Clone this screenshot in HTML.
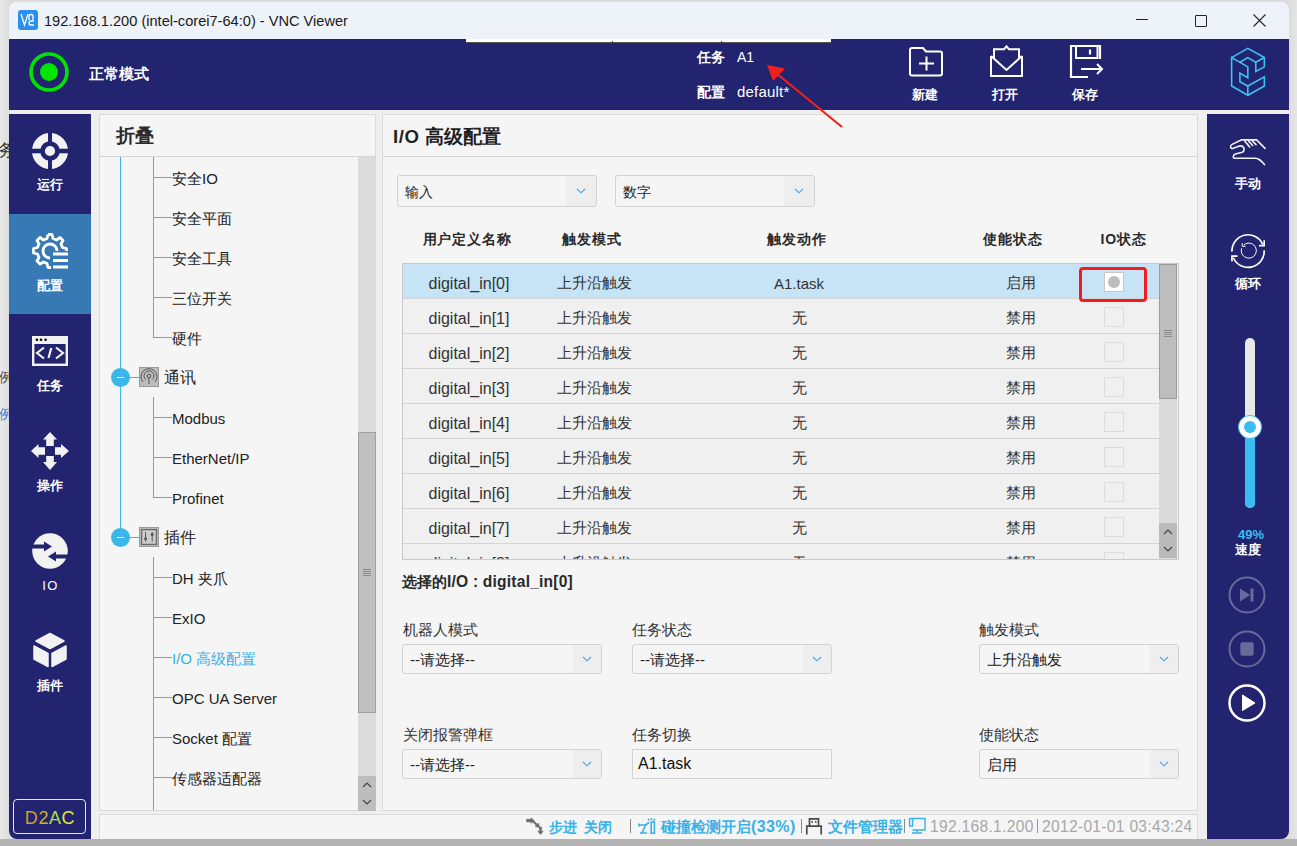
<!DOCTYPE html>
<html><head><meta charset="utf-8"><style>
html,body{margin:0;padding:0}
body{width:1297px;height:846px;position:relative;overflow:hidden;background:#e6e6e6;font-family:"Liberation Sans",sans-serif;}
.a{position:absolute}
svg{position:absolute;overflow:visible}
</style></head><body>

<div class="a" style="left:0px;top:0px;width:1297px;height:846px;background:linear-gradient(90deg,#e9e9e9 0px,#dcdcdc 9px,#dcdcdc 1289px,#e6e6e6 1297px)"></div>
<div class="a" style="left:0px;top:839px;width:1297px;height:7px;background:#b3b3b3"></div>
<div class="a" style="left:-2px;top:141.5px;font-size:17px;line-height:17px;color:#333;font-weight:normal;white-space:nowrap;">务</div>
<div class="a" style="left:-1px;top:370px;font-size:14px;line-height:14px;color:#444;font-weight:normal;white-space:nowrap;">例</div>
<div class="a" style="left:-1px;top:406.5px;font-size:14px;line-height:14px;color:#2a7ad8;font-weight:normal;white-space:nowrap;">例</div>
<div class="a" style="left:9px;top:2px;width:1280px;height:837px;background:#efefef;border-radius:8px;"></div>
<div class="a" style="left:9px;top:2px;width:1280px;height:37px;background:#eef2f9;border-radius:8px 8px 0 0;"></div>
<div class="a" style="left:18px;top:10px;width:20px;height:20px;background:#2b8ff0;border-radius:3px"></div>
<svg style="left:18px;top:10px" width="20" height="20" viewBox="0 0 20 20"><path d="M3,4 L6.5,15 L10,4" fill="none" stroke="#fff" stroke-width="1.3"/><path d="M11,10 L11,6.5 Q11,4.5 13,4.5 Q15,4.5 15,6.5 L15,10" fill="none" stroke="#fff" stroke-width="1.3"/><path d="M16,11 L13,11 Q11,11 11,13 Q11,15 13,15 L16,15" fill="none" stroke="#fff" stroke-width="1.3"/></svg>
<div class="a" style="left:44px;top:12px;font-size:14.6px;line-height:18px;color:#1a1a1a;font-weight:normal;white-space:nowrap;">192.168.1.200 (intel-corei7-64:0) - VNC Viewer</div>
<div class="a" style="left:1136px;top:19px;width:12px;height:1px;background:#222"></div>
<div class="a" style="left:1195px;top:15px;width:10px;height:10px;border:1px solid #222;border-radius:1px"></div>
<svg style="left:1253px;top:14px" width="13" height="13" viewBox="0 0 13 13"><path d="M0.5,0.5 L12.5,12.5 M12.5,0.5 L0.5,12.5" stroke="#222" stroke-width="1.1"/></svg>
<div class="a" style="left:9px;top:39px;width:1280px;height:71px;background:#22246f"></div>
<div class="a" style="left:466px;top:39px;width:365px;height:3px;background:#fff;border-bottom:1px solid #555"></div>
<div class="a" style="left:612px;top:41px;width:1px;height:2px;background:#444"></div>
<div class="a" style="left:721px;top:41px;width:1px;height:2px;background:#444"></div>
<svg style="left:29px;top:52px" width="40" height="40" viewBox="0 0 40 40"><circle cx="20" cy="20" r="18" fill="none" stroke="#00e600" stroke-width="3.6"/><circle cx="20" cy="20" r="9" fill="#00e600"/></svg>
<div class="a" style="left:89px;top:66px;font-size:14.5px;line-height:16px;color:#fff;font-weight:bold;white-space:nowrap;">正常模式</div>
<div class="a" style="left:697px;top:49px;font-size:14px;line-height:16px;color:#fff;font-weight:bold;white-space:nowrap;">任务</div>
<div class="a" style="left:737px;top:49px;font-size:14px;line-height:16px;color:#fff;font-weight:normal;white-space:nowrap;">A1</div>
<div class="a" style="left:697px;top:84px;font-size:14px;line-height:16px;color:#fff;font-weight:bold;white-space:nowrap;">配置</div>
<div class="a" style="left:737px;top:83.5px;font-size:15px;line-height:16px;color:#fff;font-weight:normal;white-space:nowrap;letter-spacing:0.2px">default*</div>
<svg style="left:909px;top:46px" width="36" height="32" viewBox="0 0 36 32"><path d="M3,2 L14,2 L17,5.5 L31,5.5 Q33,5.5 33,7.5 L33,27.5 Q33,29.5 31,29.5 L3,29.5 Q1,29.5 1,27.5 L1,4 Q1,2 3,2 Z" fill="none" stroke="#fff" stroke-width="2"/><path d="M17.5,10.5 L17.5,24.5 M10,17.5 L25,17.5" stroke="#fff" stroke-width="2"/></svg>
<div class="a" style="left:912px;top:87px;font-size:13px;line-height:15px;color:#fff;font-weight:bold;white-space:nowrap;">新建</div>
<svg style="left:989px;top:43px" width="36" height="36" viewBox="0 0 36 36"><path d="M2,13 L2,33 L33,33 L33,13" fill="none" stroke="#fff" stroke-width="2"/><path d="M2,13 L17.5,27 L33,13" fill="none" stroke="#fff" stroke-width="2"/><path d="M5,16 L5,6.3 L15,6.3 L17.5,3.3 L20,6.3 L30,6.3 L30,16" fill="none" stroke="#fff" stroke-width="2"/></svg>
<div class="a" style="left:992px;top:87px;font-size:13px;line-height:15px;color:#fff;font-weight:bold;white-space:nowrap;">打开</div>
<svg style="left:1068px;top:43px" width="38" height="36" viewBox="0 0 38 36"><path d="M20,34 L3,34 L3,3 L32,3 L32,16" fill="none" stroke="#fff" stroke-width="2.2"/><path d="M8,3 L8,15 L29.5,15 L29.5,3" fill="none" stroke="#fff" stroke-width="2"/><path d="M22,6.5 L22,11.5" stroke="#fff" stroke-width="2.2"/><path d="M13,26 L34,26 M29,21 L34,26 L29,31" fill="none" stroke="#fff" stroke-width="2"/></svg>
<div class="a" style="left:1072px;top:87px;font-size:13px;line-height:15px;color:#fff;font-weight:bold;white-space:nowrap;">保存</div>
<svg style="left:1225px;top:44px" width="45" height="56" viewBox="0 0 680 846"><g fill="none" stroke="#3cc3f2" stroke-width="24" stroke-linejoin="miter"><path d="M100,205 L345,65 L595,205 L595,345 L465,415 L465,275 L595,205"/><path d="M100,205 L100,635 L345,775 L595,635 L595,495 L345,635 L225,570 L225,440 L345,510 L345,345 Z"/><path d="M225,275 L345,205 L465,275"/><path d="M345,635 L345,775"/></g></svg>
<div class="a" style="left:9px;top:114px;width:82px;height:725px;background:#22246f;border-radius:0 0 0 8px"></div>
<div class="a" style="left:9px;top:214px;width:82px;height:100px;background:#3779b5"></div>
<svg style="left:32px;top:133px" width="36" height="36" viewBox="0 0 36 36"><circle cx="18" cy="18" r="13.9" fill="none" stroke="#f2f2f2" stroke-width="8.2"/><rect x="16" y="0" width="4" height="36" fill="#22246f"/><rect x="0" y="15.7" width="36" height="4.6" fill="#22246f"/><circle cx="18" cy="18" r="5.1" fill="#f2f2f2"/></svg>
<div class="a" style="left:-100px;width:300px;text-align:center;top:177px;font-size:13px;line-height:15px;color:#fff;font-weight:bold;white-space:nowrap;">运行</div>
<svg style="left:31px;top:232px" width="38" height="38" viewBox="0 0 38 38"><path d="M17,2.5 L21,2.5 L22,6.5 L25.5,8 L29,5.5 L32,8.5 L30,12 L31.5,15.5 L35.5,16.5 L35.5,19" fill="none" stroke="#fff" stroke-width="2.8" stroke-linejoin="round"/><path d="M17,2.5 L16,6.5 L12.5,8 L9,5.5 L6,8.5 L8,12 L6.5,15.5 L2.5,16.5 L2.5,21 L6.5,22 L8,25.5 L6,29 L9,32 L12.5,30 L16,31.5 L17,35.5 L20,35.5" fill="none" stroke="#fff" stroke-width="2.8" stroke-linejoin="round"/><path d="M19,26 A7,7 0 1 1 26,19" fill="none" stroke="#fff" stroke-width="2.8"/><path d="M22,22 L37,22 M22,28.5 L37,28.5 M22,35 L37,35" stroke="#fff" stroke-width="2.8"/></svg>
<div class="a" style="left:-100px;width:300px;text-align:center;top:278px;font-size:13px;line-height:15px;color:#fff;font-weight:bold;white-space:nowrap;">配置</div>
<svg style="left:32px;top:336px" width="36" height="30" viewBox="0 0 36 30"><rect x="1.2" y="1.2" width="33.6" height="27.6" fill="none" stroke="#f2f2f2" stroke-width="2.4"/><rect x="1" y="1" width="34" height="7" fill="#f2f2f2"/><circle cx="4.9" cy="3.8" r="1.3" fill="{NAVY}"/><circle cx="9" cy="3.8" r="1.3" fill="{NAVY}"/><circle cx="13.6" cy="3.8" r="1.3" fill="{NAVY}"/><path d="M12,11.5 L5,17 L12,22.5 M24,11.5 L31,17 L24,22.5 M19.3,12 L16.5,22" fill="none" stroke="#f2f2f2" stroke-width="2.2"/></svg>
<div class="a" style="left:-100px;width:300px;text-align:center;top:378px;font-size:13px;line-height:15px;color:#fff;font-weight:bold;white-space:nowrap;">任务</div>
<svg style="left:31px;top:432px" width="38" height="38" viewBox="0 0 38 38"><g fill="#f2f2f2"><path d="M19,0 L26,7.5 L22.8,7.5 L22.8,14 L15.2,14 L15.2,7.5 L12,7.5 Z"/><path d="M19,38 L26,30 L22.8,30 L22.8,24 L15.2,24 L15.2,30 L12,30 Z"/><path d="M0,19 L7.5,12 L7.5,15.2 L14,15.2 L14,22.8 L7.5,22.8 L7.5,26 Z"/><path d="M38,19 L30,12 L30,15.2 L24,15.2 L24,22.8 L30,22.8 L30,26 Z"/></g></svg>
<div class="a" style="left:-100px;width:300px;text-align:center;top:478px;font-size:13px;line-height:15px;color:#fff;font-weight:bold;white-space:nowrap;">操作</div>
<svg style="left:32px;top:533px" width="36" height="36" viewBox="0 0 36 36"><circle cx="18" cy="18" r="17.8" fill="#f2f2f2"/><path d="M0,13.5 L13,13.5" stroke="#22246f" stroke-width="4"/><path d="M12,8.5 L20,13.5 L12,18.5 Z" fill="#22246f"/><path d="M23,23.5 L36,23.5" stroke="#22246f" stroke-width="4"/><path d="M24,18.5 L16,23.5 L24,28.5 Z" fill="#22246f"/></svg>
<div class="a" style="left:-100px;width:300px;text-align:center;top:578px;font-size:13px;line-height:15px;color:#fff;font-weight:normal;white-space:nowrap;letter-spacing:1.5px;text-indent:1px">IO</div>
<svg style="left:32px;top:632px" width="36" height="36" viewBox="0 0 36 36"><g fill="#f2f2f2" stroke="#f2f2f2" stroke-width="1.5" stroke-linejoin="round"><path d="M18,1.5 L32,9 L18,16.5 L4,9 Z"/><path d="M2,14 L16,21.5 L16,34.5 L2,27 Z"/><path d="M20,21.5 L34,14 L34,27 L20,34.5 Z"/></g></svg>
<div class="a" style="left:-100px;width:300px;text-align:center;top:678px;font-size:13px;line-height:15px;color:#fff;font-weight:bold;white-space:nowrap;">插件</div>
<div class="a" style="left:13px;top:799px;width:71px;height:33px;border:1px solid #e8e8f0;border-radius:4px"></div>
<div class="a" style="left:13px;top:806px;width:73px;text-align:center;font-size:18px;line-height:24px;font-weight:normal;letter-spacing:0.6px;text-indent:1px"><span style="color:#d09a30">D</span><span style="color:#c9b41c">2</span><span style="color:#a8e040">A</span><span style="color:#e2e640">C</span></div>
<div class="a" style="left:99px;top:114px;width:277px;height:697px;background:#f5f5f5;border:1px solid #dadada;box-sizing:border-box"></div>
<div class="a" style="left:100px;top:156px;width:276px;height:1px;background:#d6d6d6"></div>
<div class="a" style="left:116px;top:125px;font-size:19px;line-height:22px;color:#2b2b2b;font-weight:bold;white-space:nowrap;">折叠</div>
<div class="a" style="left:100px;top:157px;width:258px;height:653px;overflow:hidden">
<div class="a" style="left:20px;top:-7px;width:1px;height:390px;background:#3ab7ea"></div>
<div class="a" style="left:53px;top:-7px;width:1px;height:188px;background:#3ab7ea"></div>
<div class="a" style="left:53px;top:240px;width:1px;height:101px;background:#3ab7ea"></div>
<div class="a" style="left:53px;top:400px;width:1px;height:260px;background:#3ab7ea"></div>
<div class="a" style="left:53px;top:20px;width:19px;height:1px;background:#3ab7ea"></div>
<div class="a" style="left:72px;top:12.5px;font-size:15px;line-height:18px;color:#222;white-space:nowrap">安全IO</div>
<div class="a" style="left:53px;top:60px;width:19px;height:1px;background:#3ab7ea"></div>
<div class="a" style="left:72px;top:52.5px;font-size:15px;line-height:18px;color:#222;white-space:nowrap">安全平面</div>
<div class="a" style="left:53px;top:100px;width:19px;height:1px;background:#3ab7ea"></div>
<div class="a" style="left:72px;top:92.5px;font-size:15px;line-height:18px;color:#222;white-space:nowrap">安全工具</div>
<div class="a" style="left:53px;top:140px;width:19px;height:1px;background:#3ab7ea"></div>
<div class="a" style="left:72px;top:132.5px;font-size:15px;line-height:18px;color:#222;white-space:nowrap">三位开关</div>
<div class="a" style="left:53px;top:180px;width:19px;height:1px;background:#3ab7ea"></div>
<div class="a" style="left:72px;top:172.5px;font-size:15px;line-height:18px;color:#222;white-space:nowrap">硬件</div>
<div class="a" style="left:53px;top:260px;width:19px;height:1px;background:#3ab7ea"></div>
<div class="a" style="left:72px;top:252.5px;font-size:15px;line-height:18px;color:#222;white-space:nowrap">Modbus</div>
<div class="a" style="left:53px;top:300px;width:19px;height:1px;background:#3ab7ea"></div>
<div class="a" style="left:72px;top:292.5px;font-size:15px;line-height:18px;color:#222;white-space:nowrap">EtherNet/IP</div>
<div class="a" style="left:53px;top:340px;width:19px;height:1px;background:#3ab7ea"></div>
<div class="a" style="left:72px;top:332.5px;font-size:15px;line-height:18px;color:#222;white-space:nowrap">Profinet</div>
<div class="a" style="left:53px;top:420px;width:19px;height:1px;background:#3ab7ea"></div>
<div class="a" style="left:72px;top:412.5px;font-size:15px;line-height:18px;color:#222;white-space:nowrap">DH 夹爪</div>
<div class="a" style="left:53px;top:460px;width:19px;height:1px;background:#3ab7ea"></div>
<div class="a" style="left:72px;top:452.5px;font-size:15px;line-height:18px;color:#222;white-space:nowrap">ExIO</div>
<div class="a" style="left:53px;top:500px;width:19px;height:1px;background:#3ab7ea"></div>
<div class="a" style="left:72px;top:492.5px;font-size:15px;line-height:18px;color:#3ab0e6;white-space:nowrap">I/O 高级配置</div>
<div class="a" style="left:53px;top:540px;width:19px;height:1px;background:#3ab7ea"></div>
<div class="a" style="left:72px;top:532.5px;font-size:15px;line-height:18px;color:#222;white-space:nowrap">OPC UA Server</div>
<div class="a" style="left:53px;top:580px;width:19px;height:1px;background:#3ab7ea"></div>
<div class="a" style="left:72px;top:572.5px;font-size:15px;line-height:18px;color:#222;white-space:nowrap">Socket 配置</div>
<div class="a" style="left:53px;top:620px;width:19px;height:1px;background:#3ab7ea"></div>
<div class="a" style="left:72px;top:612.5px;font-size:15px;line-height:18px;color:#222;white-space:nowrap">传感器适配器</div>
<div class="a" style="left:11px;top:211px;width:19px;height:19px;border-radius:50%;background:#3ab7ea"></div>
<div class="a" style="left:17px;top:220px;width:7px;height:1px;background:#fff"></div>
<div class="a" style="left:29px;top:220px;width:10px;height:1px;background:#3ab7ea"></div>
<div class="a" style="left:39px;top:210px;width:20px;height:20px;background:#bcbcbc;border:1px solid #9a9a9a;box-sizing:border-box"></div>
<div class="a" style="left:64px;top:211px;font-size:16px;line-height:20px;color:#222;white-space:nowrap">通讯</div>
<div class="a" style="left:11px;top:371px;width:19px;height:19px;border-radius:50%;background:#3ab7ea"></div>
<div class="a" style="left:17px;top:380px;width:7px;height:1px;background:#fff"></div>
<div class="a" style="left:29px;top:380px;width:10px;height:1px;background:#3ab7ea"></div>
<div class="a" style="left:39px;top:370px;width:20px;height:20px;background:#bcbcbc;border:1px solid #9a9a9a;box-sizing:border-box"></div>
<div class="a" style="left:64px;top:371px;font-size:16px;line-height:20px;color:#222;white-space:nowrap">插件</div>
</div>
<svg style="left:139px;top:367px" width="20" height="20" viewBox="0 0 20 20"><g fill="none" stroke="#555" stroke-width="1"><circle cx="10" cy="9" r="1.8"/><path d="M10,11 L10,17"/><path d="M6.5,12.5 A5,5 0 1 1 13.5,12.5"/><path d="M4,15 A8,8 0 1 1 16,15"/></g></svg>
<svg style="left:139px;top:527px" width="20" height="20" viewBox="0 0 20 20"><rect x="2.6" y="2.6" width="14.8" height="14.8" fill="#cdcdcd" stroke="#6a6a6a" stroke-width="1.3"/><g stroke="#555" stroke-width="1"><path d="M6.6,5 L6.6,14.6 M13.2,5 L13.2,14.6"/></g><circle cx="6.6" cy="11.8" r="1.5" fill="#555"/><circle cx="13.2" cy="7.6" r="1.5" fill="#555"/></svg>
<div class="a" style="left:358px;top:157px;width:18px;height:654px;background:#dcdcdc"></div>
<div class="a" style="left:358px;top:432px;width:18px;height:281px;background:#c0c0c0;border:1px solid #a0a0a0;box-sizing:border-box"></div>
<div class="a" style="left:363px;top:569px;width:8px;height:1px;background:#8a8a8a"></div>
<div class="a" style="left:363px;top:571px;width:8px;height:1px;background:#8a8a8a"></div>
<div class="a" style="left:363px;top:573px;width:8px;height:1px;background:#8a8a8a"></div>
<div class="a" style="left:363px;top:575px;width:8px;height:1px;background:#8a8a8a"></div>
<div class="a" style="left:358px;top:776px;width:18px;height:35px;background:#bdbdbd"></div>
<svg style="left:358px;top:776px" width="18" height="35" viewBox="0 0 18 35"><path d="M5,11 L9,7 L13,11 M5,24 L9,28 L13,24" fill="none" stroke="#444" stroke-width="1.2"/></svg>
<div class="a" style="left:382px;top:114px;width:816px;height:697px;background:#f5f5f5;border:1px solid #dadada;box-sizing:border-box"></div>
<div class="a" style="left:383px;top:156px;width:814px;height:1px;background:#d6d6d6"></div>
<div class="a" style="left:393px;top:126px;font-size:18.6px;line-height:22px;color:#1f1f1f;font-weight:bold;white-space:nowrap;"><span style="letter-spacing:0.6px">I/O </span>高级配置</div>
<div class="a" style="left:397px;top:175px;width:200px;height:32px;background:#f5f5f5;border:1px solid #d2d2d2;border-radius:3px;box-sizing:border-box;overflow:hidden"><div class="a" style="right:0;top:0;width:30px;height:100%;background:#eeeeee"></div><div class="a" style="left:7px;top:1px;line-height:30px;font-size:14px;color:#222;white-space:nowrap">输入</div><svg style="right:10px;top:12px" width="10" height="6" viewBox="0 0 10 6"><path d="M1,1 L5,4.8 L9,1" fill="none" stroke="#4aa3ea" stroke-width="1.1"/></svg></div>
<div class="a" style="left:615px;top:175px;width:200px;height:32px;background:#f5f5f5;border:1px solid #d2d2d2;border-radius:3px;box-sizing:border-box;overflow:hidden"><div class="a" style="right:0;top:0;width:30px;height:100%;background:#eeeeee"></div><div class="a" style="left:7px;top:1px;line-height:30px;font-size:14px;color:#222;white-space:nowrap">数字</div><svg style="right:10px;top:12px" width="10" height="6" viewBox="0 0 10 6"><path d="M1,1 L5,4.8 L9,1" fill="none" stroke="#4aa3ea" stroke-width="1.1"/></svg></div>
<div class="a" style="left:317px;width:300px;text-align:center;top:230.5px;font-size:14px;line-height:17px;color:#2a2a2a;font-weight:bold;white-space:nowrap;letter-spacing:0.8px">用户定义名称</div>
<div class="a" style="left:442px;width:300px;text-align:center;top:230.5px;font-size:14px;line-height:17px;color:#2a2a2a;font-weight:bold;white-space:nowrap;letter-spacing:0.8px">触发模式</div>
<div class="a" style="left:647px;width:300px;text-align:center;top:230.5px;font-size:14px;line-height:17px;color:#2a2a2a;font-weight:bold;white-space:nowrap;letter-spacing:0.8px">触发动作</div>
<div class="a" style="left:863px;width:300px;text-align:center;top:230.5px;font-size:14px;line-height:17px;color:#2a2a2a;font-weight:bold;white-space:nowrap;letter-spacing:0.8px">使能状态</div>
<div class="a" style="left:973.5px;width:300px;text-align:center;top:230.5px;font-size:14px;line-height:17px;color:#2a2a2a;font-weight:bold;white-space:nowrap;letter-spacing:0.8px">IO状态</div>
<div class="a" style="left:402px;top:263px;width:777px;height:297px;background:#f0f0f0;border:1px solid #c9c9c9;box-sizing:border-box"></div>
<div class="a" style="left:403px;top:264px;width:756px;height:295px;overflow:hidden">
<div class="a" style="left:0;top:0px;width:756px;height:35px;background:#c6e4f6;border-bottom:1px solid #d4d4d4;box-sizing:border-box"></div>
<div class="a" style="left:-34px;width:200px;text-align:center;top:1.5px;line-height:35px;font-size:16px;color:#333;white-space:nowrap">digital_in[0]</div>
<div class="a" style="left:91.5px;width:200px;text-align:center;top:0.5px;line-height:35px;font-size:15px;color:#333;white-space:nowrap">上升沿触发</div>
<div class="a" style="left:296px;width:200px;text-align:center;top:1.5px;line-height:35px;font-size:15px;color:#333;white-space:nowrap">A1.task</div>
<div class="a" style="left:517.5px;width:200px;text-align:center;top:0.5px;line-height:35px;font-size:15px;color:#333;white-space:nowrap">启用</div>
<div class="a" style="left:701px;top:8px;width:20px;height:20px;background:#fff;border:1px solid #c8c8c8;box-sizing:border-box"></div>
<div class="a" style="left:705px;top:12px;width:12px;height:12px;border-radius:50%;background:#bdbdbd"></div>
<div class="a" style="left:0;top:35px;width:756px;height:35px;background:#f0f0f0;border-bottom:1px solid #d4d4d4;box-sizing:border-box"></div>
<div class="a" style="left:-34px;width:200px;text-align:center;top:36.5px;line-height:35px;font-size:16px;color:#333;white-space:nowrap">digital_in[1]</div>
<div class="a" style="left:91.5px;width:200px;text-align:center;top:35.5px;line-height:35px;font-size:15px;color:#333;white-space:nowrap">上升沿触发</div>
<div class="a" style="left:296px;width:200px;text-align:center;top:35.5px;line-height:35px;font-size:15px;color:#333;white-space:nowrap">无</div>
<div class="a" style="left:517.5px;width:200px;text-align:center;top:35.5px;line-height:35px;font-size:15px;color:#333;white-space:nowrap">禁用</div>
<div class="a" style="left:701px;top:43px;width:20px;height:20px;background:#f0f0f0;border:1px solid #dcdcdc;box-sizing:border-box"></div>
<div class="a" style="left:0;top:70px;width:756px;height:35px;background:#f0f0f0;border-bottom:1px solid #d4d4d4;box-sizing:border-box"></div>
<div class="a" style="left:-34px;width:200px;text-align:center;top:71.5px;line-height:35px;font-size:16px;color:#333;white-space:nowrap">digital_in[2]</div>
<div class="a" style="left:91.5px;width:200px;text-align:center;top:70.5px;line-height:35px;font-size:15px;color:#333;white-space:nowrap">上升沿触发</div>
<div class="a" style="left:296px;width:200px;text-align:center;top:70.5px;line-height:35px;font-size:15px;color:#333;white-space:nowrap">无</div>
<div class="a" style="left:517.5px;width:200px;text-align:center;top:70.5px;line-height:35px;font-size:15px;color:#333;white-space:nowrap">禁用</div>
<div class="a" style="left:701px;top:78px;width:20px;height:20px;background:#f0f0f0;border:1px solid #dcdcdc;box-sizing:border-box"></div>
<div class="a" style="left:0;top:105px;width:756px;height:35px;background:#f0f0f0;border-bottom:1px solid #d4d4d4;box-sizing:border-box"></div>
<div class="a" style="left:-34px;width:200px;text-align:center;top:106.5px;line-height:35px;font-size:16px;color:#333;white-space:nowrap">digital_in[3]</div>
<div class="a" style="left:91.5px;width:200px;text-align:center;top:105.5px;line-height:35px;font-size:15px;color:#333;white-space:nowrap">上升沿触发</div>
<div class="a" style="left:296px;width:200px;text-align:center;top:105.5px;line-height:35px;font-size:15px;color:#333;white-space:nowrap">无</div>
<div class="a" style="left:517.5px;width:200px;text-align:center;top:105.5px;line-height:35px;font-size:15px;color:#333;white-space:nowrap">禁用</div>
<div class="a" style="left:701px;top:113px;width:20px;height:20px;background:#f0f0f0;border:1px solid #dcdcdc;box-sizing:border-box"></div>
<div class="a" style="left:0;top:140px;width:756px;height:35px;background:#f0f0f0;border-bottom:1px solid #d4d4d4;box-sizing:border-box"></div>
<div class="a" style="left:-34px;width:200px;text-align:center;top:141.5px;line-height:35px;font-size:16px;color:#333;white-space:nowrap">digital_in[4]</div>
<div class="a" style="left:91.5px;width:200px;text-align:center;top:140.5px;line-height:35px;font-size:15px;color:#333;white-space:nowrap">上升沿触发</div>
<div class="a" style="left:296px;width:200px;text-align:center;top:140.5px;line-height:35px;font-size:15px;color:#333;white-space:nowrap">无</div>
<div class="a" style="left:517.5px;width:200px;text-align:center;top:140.5px;line-height:35px;font-size:15px;color:#333;white-space:nowrap">禁用</div>
<div class="a" style="left:701px;top:148px;width:20px;height:20px;background:#f0f0f0;border:1px solid #dcdcdc;box-sizing:border-box"></div>
<div class="a" style="left:0;top:175px;width:756px;height:35px;background:#f0f0f0;border-bottom:1px solid #d4d4d4;box-sizing:border-box"></div>
<div class="a" style="left:-34px;width:200px;text-align:center;top:176.5px;line-height:35px;font-size:16px;color:#333;white-space:nowrap">digital_in[5]</div>
<div class="a" style="left:91.5px;width:200px;text-align:center;top:175.5px;line-height:35px;font-size:15px;color:#333;white-space:nowrap">上升沿触发</div>
<div class="a" style="left:296px;width:200px;text-align:center;top:175.5px;line-height:35px;font-size:15px;color:#333;white-space:nowrap">无</div>
<div class="a" style="left:517.5px;width:200px;text-align:center;top:175.5px;line-height:35px;font-size:15px;color:#333;white-space:nowrap">禁用</div>
<div class="a" style="left:701px;top:183px;width:20px;height:20px;background:#f0f0f0;border:1px solid #dcdcdc;box-sizing:border-box"></div>
<div class="a" style="left:0;top:210px;width:756px;height:35px;background:#f0f0f0;border-bottom:1px solid #d4d4d4;box-sizing:border-box"></div>
<div class="a" style="left:-34px;width:200px;text-align:center;top:211.5px;line-height:35px;font-size:16px;color:#333;white-space:nowrap">digital_in[6]</div>
<div class="a" style="left:91.5px;width:200px;text-align:center;top:210.5px;line-height:35px;font-size:15px;color:#333;white-space:nowrap">上升沿触发</div>
<div class="a" style="left:296px;width:200px;text-align:center;top:210.5px;line-height:35px;font-size:15px;color:#333;white-space:nowrap">无</div>
<div class="a" style="left:517.5px;width:200px;text-align:center;top:210.5px;line-height:35px;font-size:15px;color:#333;white-space:nowrap">禁用</div>
<div class="a" style="left:701px;top:218px;width:20px;height:20px;background:#f0f0f0;border:1px solid #dcdcdc;box-sizing:border-box"></div>
<div class="a" style="left:0;top:245px;width:756px;height:35px;background:#f0f0f0;border-bottom:1px solid #d4d4d4;box-sizing:border-box"></div>
<div class="a" style="left:-34px;width:200px;text-align:center;top:246.5px;line-height:35px;font-size:16px;color:#333;white-space:nowrap">digital_in[7]</div>
<div class="a" style="left:91.5px;width:200px;text-align:center;top:245.5px;line-height:35px;font-size:15px;color:#333;white-space:nowrap">上升沿触发</div>
<div class="a" style="left:296px;width:200px;text-align:center;top:245.5px;line-height:35px;font-size:15px;color:#333;white-space:nowrap">无</div>
<div class="a" style="left:517.5px;width:200px;text-align:center;top:245.5px;line-height:35px;font-size:15px;color:#333;white-space:nowrap">禁用</div>
<div class="a" style="left:701px;top:253px;width:20px;height:20px;background:#f0f0f0;border:1px solid #dcdcdc;box-sizing:border-box"></div>
<div class="a" style="left:0;top:280px;width:756px;height:35px;background:#f0f0f0;border-bottom:1px solid #d4d4d4;box-sizing:border-box"></div>
<div class="a" style="left:-34px;width:200px;text-align:center;top:281.5px;line-height:35px;font-size:16px;color:#333;white-space:nowrap">digital_in[8]</div>
<div class="a" style="left:91.5px;width:200px;text-align:center;top:280.5px;line-height:35px;font-size:15px;color:#333;white-space:nowrap">上升沿触发</div>
<div class="a" style="left:296px;width:200px;text-align:center;top:280.5px;line-height:35px;font-size:15px;color:#333;white-space:nowrap">无</div>
<div class="a" style="left:517.5px;width:200px;text-align:center;top:280.5px;line-height:35px;font-size:15px;color:#333;white-space:nowrap">禁用</div>
<div class="a" style="left:701px;top:288px;width:20px;height:20px;background:#f0f0f0;border:1px solid #dcdcdc;box-sizing:border-box"></div>
</div>
<div class="a" style="left:1159px;top:264px;width:18px;height:295px;background:#dadada"></div>
<div class="a" style="left:1159px;top:264px;width:18px;height:135px;background:#bdbdbd;border:1px solid #9c9c9c;box-sizing:border-box"></div>
<div class="a" style="left:1164px;top:330px;width:8px;height:1px;background:#8a8a8a"></div>
<div class="a" style="left:1164px;top:332px;width:8px;height:1px;background:#8a8a8a"></div>
<div class="a" style="left:1164px;top:334px;width:8px;height:1px;background:#8a8a8a"></div>
<div class="a" style="left:1164px;top:336px;width:8px;height:1px;background:#8a8a8a"></div>
<div class="a" style="left:1159px;top:523px;width:18px;height:35px;background:#bbbbbb"></div>
<svg style="left:1159px;top:523px" width="18" height="35" viewBox="0 0 18 35"><path d="M5,11 L9,7 L13,11 M5,24 L9,28 L13,24" fill="none" stroke="#444" stroke-width="1.2"/></svg>
<div class="a" style="left:1079px;top:267px;width:68px;height:35px;border:3px solid #f41c1c;border-radius:4px;box-sizing:border-box"></div>
<div class="a" style="left:402px;top:572.5px;font-size:14.5px;line-height:18px;color:#2a2a2a;font-weight:bold;white-space:nowrap;">选择的<span style="font-size:15.6px;letter-spacing:0.2px">I/O : digital_in[0]</span></div>
<div class="a" style="left:403px;top:621px;font-size:14.5px;line-height:18px;color:#333;font-weight:normal;white-space:nowrap;">机器人模式</div>
<div class="a" style="left:632px;top:621px;font-size:14.5px;line-height:18px;color:#333;font-weight:normal;white-space:nowrap;">任务状态</div>
<div class="a" style="left:979px;top:621px;font-size:14.5px;line-height:18px;color:#333;font-weight:normal;white-space:nowrap;">触发模式</div>
<div class="a" style="left:403px;top:726px;font-size:14.5px;line-height:18px;color:#333;font-weight:normal;white-space:nowrap;">关闭报警弹框</div>
<div class="a" style="left:632px;top:726px;font-size:14.5px;line-height:18px;color:#333;font-weight:normal;white-space:nowrap;">任务切换</div>
<div class="a" style="left:979px;top:726px;font-size:14.5px;line-height:18px;color:#333;font-weight:normal;white-space:nowrap;">使能状态</div>
<div class="a" style="left:402px;top:644px;width:200px;height:30px;background:#f5f5f5;border:1px solid #d2d2d2;border-radius:3px;box-sizing:border-box;overflow:hidden"><div class="a" style="right:0;top:0;width:28px;height:100%;background:#eeeeee"></div><div class="a" style="left:7px;top:1px;line-height:28px;font-size:15px;color:#222;white-space:nowrap">--请选择--</div><svg style="right:9px;top:11px" width="10" height="6" viewBox="0 0 10 6"><path d="M1,1 L5,4.8 L9,1" fill="none" stroke="#4aa3ea" stroke-width="1.1"/></svg></div>
<div class="a" style="left:632px;top:644px;width:200px;height:30px;background:#f5f5f5;border:1px solid #d2d2d2;border-radius:3px;box-sizing:border-box;overflow:hidden"><div class="a" style="right:0;top:0;width:28px;height:100%;background:#eeeeee"></div><div class="a" style="left:7px;top:1px;line-height:28px;font-size:15px;color:#222;white-space:nowrap">--请选择--</div><svg style="right:9px;top:11px" width="10" height="6" viewBox="0 0 10 6"><path d="M1,1 L5,4.8 L9,1" fill="none" stroke="#4aa3ea" stroke-width="1.1"/></svg></div>
<div class="a" style="left:979px;top:644px;width:200px;height:30px;background:#f5f5f5;border:1px solid #d2d2d2;border-radius:3px;box-sizing:border-box;overflow:hidden"><div class="a" style="right:0;top:0;width:28px;height:100%;background:#eeeeee"></div><div class="a" style="left:7px;top:1px;line-height:28px;font-size:15px;color:#222;white-space:nowrap">上升沿触发</div><svg style="right:9px;top:11px" width="10" height="6" viewBox="0 0 10 6"><path d="M1,1 L5,4.8 L9,1" fill="none" stroke="#4aa3ea" stroke-width="1.1"/></svg></div>
<div class="a" style="left:402px;top:749px;width:200px;height:30px;background:#f5f5f5;border:1px solid #d2d2d2;border-radius:3px;box-sizing:border-box;overflow:hidden"><div class="a" style="right:0;top:0;width:28px;height:100%;background:#eeeeee"></div><div class="a" style="left:7px;top:1px;line-height:28px;font-size:15px;color:#222;white-space:nowrap">--请选择--</div><svg style="right:9px;top:11px" width="10" height="6" viewBox="0 0 10 6"><path d="M1,1 L5,4.8 L9,1" fill="none" stroke="#4aa3ea" stroke-width="1.1"/></svg></div>
<div class="a" style="left:632px;top:749px;width:200px;height:30px;background:#f5f5f5;border:1px solid #d2d2d2;box-sizing:border-box"></div>
<div class="a" style="left:638px;top:754px;font-size:16px;line-height:20px;color:#111;font-weight:normal;white-space:nowrap;">A1.task</div>
<div class="a" style="left:979px;top:749px;width:200px;height:30px;background:#f5f5f5;border:1px solid #d2d2d2;border-radius:3px;box-sizing:border-box;overflow:hidden"><div class="a" style="right:0;top:0;width:28px;height:100%;background:#eeeeee"></div><div class="a" style="left:7px;top:1px;line-height:28px;font-size:15px;color:#222;white-space:nowrap">启用</div><svg style="right:9px;top:11px" width="10" height="6" viewBox="0 0 10 6"><path d="M1,1 L5,4.8 L9,1" fill="none" stroke="#4aa3ea" stroke-width="1.1"/></svg></div>
<div class="a" style="left:99px;top:814px;width:1099px;height:25px;background:#f5f5f5;border:1px solid #dadada;border-bottom:none;box-sizing:border-box"></div>
<svg style="left:525px;top:817px" width="20" height="19" viewBox="0 0 20 19"><g fill="#6e6e6e" stroke="#6e6e6e" stroke-width="0.6" stroke-linejoin="round"><path d="M1.5,2.3 L6,2.3 L6,0.8 L9.2,3.6 L6,6.4 L6,4.9 L1.5,4.9 Z"/><path d="M8.8,3.8 L12.4,7.3 L13.6,6 L14.6,10.6 L10,9.6 L11.2,8.5 L7.6,5 Z"/><path d="M14.4,10 L16.6,10 L16.6,14.3 L18.2,14.3 L15.5,17.6 L12.8,14.3 L14.4,14.3 Z"/></g></svg>
<div class="a" style="left:549px;top:818.5px;font-size:14.3px;line-height:17px;color:#38b0e8;font-weight:bold;white-space:nowrap;letter-spacing:0.3px;word-spacing:2px">步进 关闭</div>
<div class="a" style="left:630px;top:819px;width:1px;height:14px;background:#888"></div>
<svg style="left:637px;top:817px" width="20" height="18" viewBox="0 0 20 18"><g fill="none" stroke="#38b0e8" stroke-width="1.6"><path d="M3,16 L10,16 M5,16 L8.5,8 L2,8"/><path d="M2,6.5 L2,9.5 M8.5,8 L12,5.5"/><rect x="14.2" y="5" width="3.2" height="11.2"/><path d="M11,2 L12.5,3.5 M14.5,1 L14.5,3 M18,2 L16.5,3.5"/></g></svg>
<div class="a" style="left:661px;top:818px;font-size:14.5px;line-height:17px;color:#38b0e8;font-weight:bold;white-space:nowrap;">碰撞检测开启<span style="font-size:16px;letter-spacing:0.4px">(33%)</span></div>
<div class="a" style="left:801px;top:819px;width:1px;height:14px;background:#888"></div>
<svg style="left:805px;top:817px" width="18" height="18" viewBox="0 0 18 18"><g fill="none" stroke="#4a4a4a" stroke-width="1.7"><path d="M1.8,17.5 L1.8,9.2 L16.2,9.2 L16.2,17.5"/><path d="M4.5,9.2 L4.5,1.8 L13.5,1.8 L13.5,9.2"/></g><rect x="6.5" y="4" width="1.5" height="1.8" fill="#4a4a4a"/><rect x="10" y="4" width="1.5" height="1.8" fill="#4a4a4a"/></svg>
<div class="a" style="left:828px;top:818.5px;font-size:14.6px;line-height:17px;color:#38b0e8;font-weight:bold;white-space:nowrap;">文件管理器</div>
<div class="a" style="left:904px;top:819px;width:1px;height:14px;background:#888"></div>
<svg style="left:908px;top:817px" width="19" height="18" viewBox="0 0 19 18"><g fill="none" stroke="#38b0e8" stroke-width="1.4"><path d="M4.5,1.5 L17,1.5 L17,13 L4.5,13"/><rect x="1.6" y="1.6" width="3" height="7.5"/><path d="M9,13 L9,16 M4,16 L14,16"/></g></svg>
<div class="a" style="left:930px;top:817.5px;font-size:15.6px;line-height:17px;color:#a8a8a8;font-weight:normal;white-space:nowrap;letter-spacing:0.3px">192.168.1.200</div>
<div class="a" style="left:1037px;top:819px;width:1px;height:14px;background:#999"></div>
<div class="a" style="left:1042px;top:817.5px;font-size:15.6px;line-height:17px;color:#a8a8a8;font-weight:normal;white-space:nowrap;letter-spacing:0.3px">2012-01-01 03:43:24</div>
<div class="a" style="left:1207px;top:114px;width:82px;height:725px;background:#22246f;border-radius:0 0 8px 0"></div>
<svg style="left:1222px;top:130px" width="50" height="45" viewBox="0 0 940 846"><g fill="none" stroke="#f2f2f2" stroke-width="30" stroke-linecap="round" stroke-linejoin="round"><path d="M800,650 C740,580 700,530 620,530 L230,530 C200,530 210,460 250,450 L380,420 C430,405 420,330 390,310 C360,290 320,300 290,315 L210,345 C150,360 145,290 190,270 L370,185 L650,185 L810,345"/><path d="M430,210 L520,320 M500,210 L575,290 M570,205 L640,275"/></g></svg>
<div class="a" style="left:1098px;width:300px;text-align:center;top:176px;font-size:13px;line-height:15px;color:#fff;font-weight:bold;white-space:nowrap;">手动</div>
<svg style="left:1225px;top:228px" width="47" height="47" viewBox="0 0 846 846"><g fill="none" stroke="#fff" stroke-width="30"><path d="M125,425 A290,290 0 0 1 680,295"/><path d="M612,318 L705,318 L705,220"/><path d="M705,400 A290,290 0 0 1 150,535"/><path d="M225,505 L125,505 L125,605"/></g><g fill="none" stroke="#fff" stroke-width="18"><path d="M300,365 A135,135 0 1 0 340,305"/><path d="M310,270 L310,330 L370,330"/></g></svg>
<div class="a" style="left:1098px;width:300px;text-align:center;top:276px;font-size:13px;line-height:15px;color:#fff;font-weight:bold;white-space:nowrap;">循环</div>
<div class="a" style="left:1245px;top:338px;width:10px;height:170px;background:#e8e8e8;border-radius:5px"></div>
<div class="a" style="left:1245px;top:427px;width:10px;height:81px;background:#3bbcee;border-radius:0 0 5px 5px"></div>
<div class="a" style="left:1238px;top:415px;width:24px;height:24px;border-radius:50%;background:#fff;border:1.5px solid #3bbcee;box-sizing:border-box"></div>
<div class="a" style="left:1244px;top:421px;width:12px;height:12px;border-radius:50%;background:#3bbcee"></div>
<div class="a" style="left:1101px;width:300px;text-align:center;top:527px;font-size:13px;line-height:15px;color:#3bbcee;font-weight:bold;white-space:nowrap;">49%</div>
<div class="a" style="left:1098px;width:300px;text-align:center;top:542px;font-size:13px;line-height:15px;color:#fff;font-weight:bold;white-space:nowrap;">速度</div>
<svg style="left:1228px;top:576px" width="38" height="38" viewBox="0 0 38 38"><circle cx="19" cy="19" r="17.5" fill="none" stroke="#6a6a9a" stroke-width="2"/><path d="M12,12.5 L22,19 L12,25.5 Z" fill="#6a6a9a"/><rect x="22.5" y="12.5" width="3" height="13" fill="#6a6a9a"/></svg>
<svg style="left:1228px;top:630px" width="38" height="38" viewBox="0 0 38 38"><circle cx="19" cy="19" r="17.5" fill="none" stroke="#6a6a9a" stroke-width="2"/><rect x="12.3" y="12.3" width="13.4" height="13.4" rx="2" fill="#6a6a9a"/></svg>
<svg style="left:1228px;top:684px" width="38" height="38" viewBox="0 0 38 38"><circle cx="19" cy="19" r="17.5" fill="none" stroke="#fff" stroke-width="2.5"/><path d="M14.5,11 L27,19 L14.5,26.5 Z" fill="#fff" stroke="#fff" stroke-width="1" stroke-linejoin="round"/></svg>
<svg style="left:0;top:0" width="1297" height="846" viewBox="0 0 1297 846"><path d="M842,127 L776,73" stroke="#f0201c" stroke-width="2.2"/><path d="M767,65 L785,68.5 L773,81 Z" fill="#f0201c"/></svg>
</body></html>
